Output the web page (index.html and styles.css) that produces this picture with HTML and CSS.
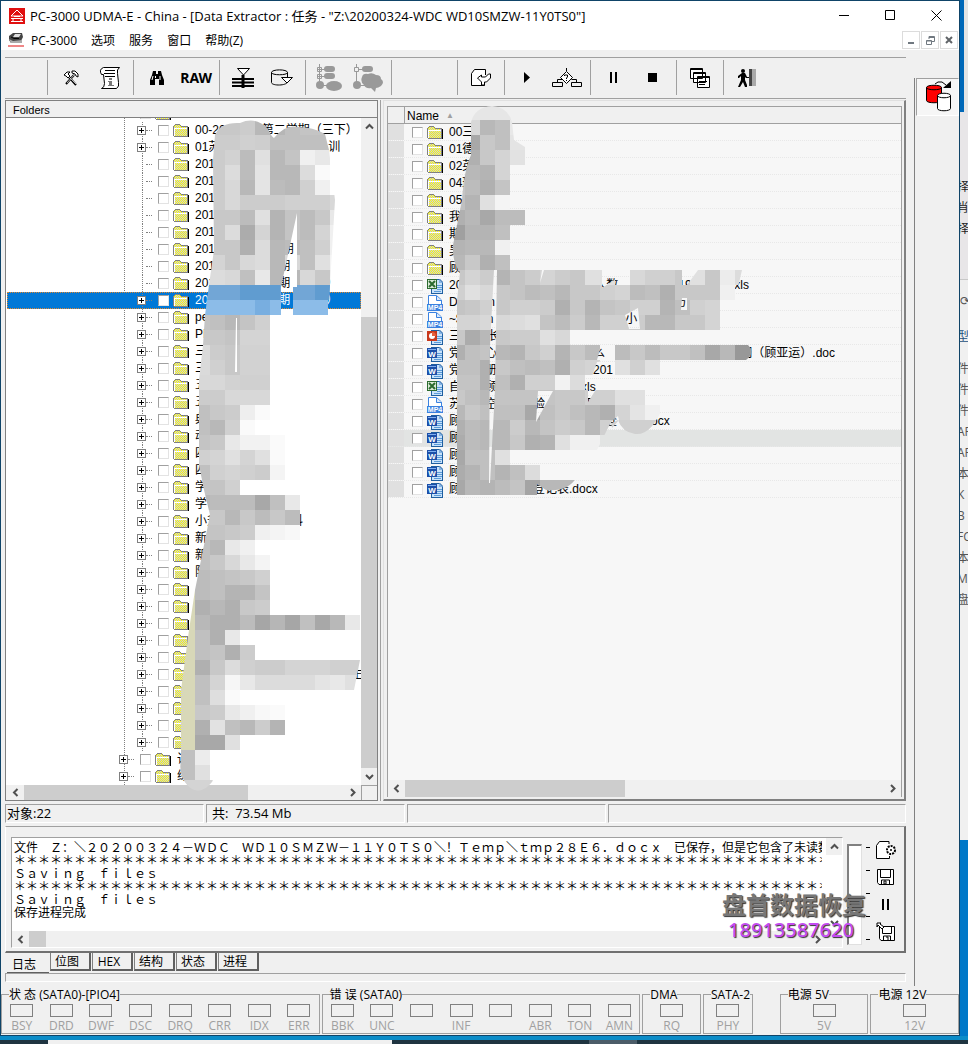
FILE: index.html
```html
<!DOCTYPE html>
<html lang="zh-CN">
  <head>
    <meta charset="UTF-8" />
    <meta name="viewport" content="width=device-width, initial-scale=1.0" />
    <title>PC-3000 UDMA-E</title>
    <link rel="stylesheet" href="styles.css" />
  </head>
  <body>
    <svg class="defs" width="0" height="0" aria-hidden="true">
      <defs>
        <pattern id="dither" width="2" height="2" patternUnits="userSpaceOnUse">
          <rect width="2" height="2" fill="#ffff00" />
          <rect width="1" height="1" fill="#c4c4ec" />
          <rect x="1" y="1" width="1" height="1" fill="#c4c4ec" />
        </pattern>
        <symbol id="i-folder" viewBox="0 0 16 14">
          <path d="M2 13h14V3h-1v9H2z" fill="#000" />
          <path d="M0 2h1V1h1V0h5v1h1v1h7v11H1v-1H0z" fill="#808080" />
          <path d="M1 2h1V1h5v1h1v1h6v9H1z" fill="url(#dither)" />
          <path d="M1 4h13v1H2v7H1z" fill="#fff" />
        </symbol>
        <symbol id="i-page" viewBox="0 0 16 16">
          <path d="M4 1h9l3 3v12H4z" fill="#1f5fa0" />
          <path d="M5 2h7v3h3v10H5z" fill="#c9e2fa" />
          <path d="M12 1v4h4z" fill="#86b4e4" />
          <path d="M10 7.500h5M10 9.500h5M10 11.500h5M7 13.500h7" stroke="#5b9bd8" />
        </symbol>
        <symbol id="i-doc" viewBox="0 0 16 16">
          <use href="#i-page" width="16" height="16" />
          <path d="M0 2h10v10H0z" fill="#1c4fa8" />
          <path d="M1 3h8v1H1z" fill="#7fb0ef" />
          <text class="badge" x="5" y="11" font-size="8">W</text>
        </symbol>
        <symbol id="i-xls" viewBox="0 0 16 16">
          <use href="#i-page" width="16" height="16" />
          <path d="M0 1h10v10H0z" fill="#2c6b2f" />
          <path d="M1 2h8v8H1z" fill="#dcebd8" />
          <path d="M2 3l6 6M8 3L2 9" stroke="#2c6b2f" stroke-width="2" />
        </symbol>
        <symbol id="i-ppt" viewBox="0 0 16 16">
          <use href="#i-page" width="16" height="16" />
          <path d="M0 2h10v10H0z" fill="#c8381c" />
          <circle cx="5" cy="7" r="3" fill="#fff" />
          <path d="M5 7V3a4 4 0 0 1 4 4z" fill="#e8603c" />
        </symbol>
        <symbol id="i-mp4" viewBox="0 0 16 16">
          <path d="M1.500 10V.5h8L14.500 5v5" fill="#fff" stroke="#3b82e0" />
          <path d="M9.500 1v4.500h5" fill="#dbe9fb" stroke="#3b82e0" />
          <path d="M0 9h16v7H0z" fill="#3b82e0" />
          <text class="badge" x="8" y="15" font-size="7">MP4</text>
        </symbol>
        <symbol id="i-up" viewBox="0 0 9 9"><path d="M1 6.500L4.500 3 8 6.500" fill="none" stroke="#505050" stroke-width="2" /></symbol>
        <symbol id="i-down" viewBox="0 0 9 9"><path d="M1 3l3.500 3.500L8 3" fill="none" stroke="#505050" stroke-width="2" /></symbol>
        <symbol id="i-left" viewBox="0 0 9 9"><path d="M6.500 1L3 4.500 6.500 8" fill="none" stroke="#505050" stroke-width="2" /></symbol>
        <symbol id="i-right" viewBox="0 0 9 9"><path d="M3 1l3.500 3.500L3 8" fill="none" stroke="#505050" stroke-width="2" /></symbol>
      </defs>
    </svg>

    <div class="screen">
      <div class="window">
        <header class="title-bar">
          <svg class="app-icon" width="16" height="16" viewBox="0 0 16 16">
            <path d="M0 0h16v16H0z" fill="#e01010" />
            <path d="M8 2L2 8h12zM2 10.500h12M5 8.500h6M2 13.500h12M4 10v4M12 10v4" fill="none" stroke="#fff" />
          </svg>
          <h1>PC-3000 UDMA-E - China - [Data Extractor : 任务 - "Z:\20200324-WDC WD10SMZW-11Y0TS0"]</h1>
          <div class="window-buttons">
            <button type="button" aria-label="Minimize"><svg width="11" height="11"><path d="M0 5.500h10" stroke="#000" /></svg></button>
            <button type="button" aria-label="Maximize"><svg width="11" height="11"><path d="M.5.5h9v9h-9z" fill="none" stroke="#000" /></svg></button>
            <button type="button" aria-label="Close"><svg width="11" height="11"><path d="M.5.5l10 10M10.500.5l-10 10" stroke="#000" /></svg></button>
          </div>
        </header>

        <nav class="menu-bar">
          <svg class="app-icon" width="16" height="14" viewBox="0 0 16 14">
            <path d="M1 3l4-3h9l1 4-3 6H3L1 7z" fill="#444" />
            <path d="M7 1h6l-2 3H5z" fill="#ddd" /><path d="M1 6l4 2 9-1v3H3z" fill="#aaa" />
            <path d="M3 4l3 1.500h5" fill="none" stroke="#000" />
            <path d="M0 13h16" stroke="#e01010" />
          </svg>
          <button type="button">PC-3000</button>
          <button type="button">选项</button>
          <button type="button">服务</button>
          <button type="button">窗口</button>
          <button type="button">帮助(Z)</button>
          <div class="child-buttons">
            <button type="button" aria-label="Minimize child"><svg width="9" height="9"><path d="M1 7h6" stroke="#707880" stroke-width="2" /></svg></button>
            <button type="button" aria-label="Restore child"><svg width="9" height="9"><path d="M.5 4.500h5v4h-5zM.5 5h5M3 3V.5h5.500v5H6M3 1.500h5" fill="none" stroke="#707880" /></svg></button>
            <button type="button" aria-label="Close child"><svg width="9" height="9"><path d="M1 1l6 6M7 1L1 7" stroke="#606468" stroke-width="2" /></svg></button>
          </div>
        </nav>

        <div class="workspace">
          <main class="main">
            <div class="toolbar">
              <div class="tool-group start"></div>
              <div class="tool-group pair">
                <button type="button" aria-label="Tools"><svg width="16" height="16"><path d="M3 14l8-9M5 6l8 9" stroke="#000" stroke-width="2" fill="none" /><path d="M4 13l7-8M6 7l7 7" stroke="#fff" fill="none" stroke-width=".7" /><path d="M1 5l3-3h3L5 4l2 2-2 2-2-2zM9 1h3l3 3v3l-2-1-1-2-3-1z" fill="#fff" stroke="#000" /></svg></button>
                <button type="button" aria-label="Script info"><svg width="22" height="24"><path d="M4.500 1.500h16q-3 2-2 6l1 9q1 4-2 6h-15q3-1 3-5l-1-9h-2q-3-5 2-7z" fill="#fff" stroke="#000" /><path d="M6 4.500h10M5 7.500h11M6 10.500h10" stroke="#000" /><path d="M10 12h3v2h-3zM9 15h4v4h2v1H9v-1h1v-3H9z" fill="#777" /></svg></button>
              </div>
              <div class="tool-group pair">
                <button type="button" aria-label="Find"><svg width="16" height="14"><path d="M4 0h3v3h2V0h3l1 4 2 5v5h-5V8H6v6H1V9l2-5z" fill="#000" /><path d="M3 9l1-4M11 9V5M6.500 5v2" stroke="#fff" /></svg></button>
                <button type="button" class="raw">RAW</button>
              </div>
              <div class="tool-group pair">
                <button type="button" aria-label="Level"><svg width="22" height="20"><path d="M5.500.5h12L11.500 7z" fill="#fff" stroke="#000" /><path d="M0 11h22M0 14.500h22M0 18h22" stroke="#000" stroke-width="2" /><path d="M11 7v13" stroke="#000" stroke-width="3" /></svg></button>
                <button type="button" aria-label="Database"><svg width="24" height="18"><path d="M1.500 3.500C1.500 0 17.500 0 17.500 3.500v9C17.500 17 1.500 17 1.500 13.500zM1.500 3.500c0 3 16 3 16 0" fill="#f0f0f0" stroke="#000" /><path d="M11.500 8.500h11L17 14z" fill="#fff" stroke="#000" /></svg></button>
              </div>
              <div class="tool-group pair">
                <button type="button" disabled aria-label="Expand tree"><svg width="26" height="28"><path d="M3.500 0v20M3 5.500h7M3 12.500h7M5 21.500h8" stroke="#999" fill="none" /><path d="M1.500 3.500h4v4h-4zM1.500 10.500h4v4h-4z" fill="#f0f0f0" stroke="#999" /><path d="M3.500 4v3M2 5.500h3M3.500 11v3M2 12.500h3" stroke="#999" /><rect x="8" y="2" width="11" height="6" rx="3" fill="#999" /><rect x="8" y="9" width="11" height="6" rx="3" fill="#999" /><circle cx="4" cy="21" r="4" fill="#999" /><ellipse cx="18" cy="22" rx="8" ry="5" fill="#999" /></svg></button>
                <button type="button" disabled aria-label="Cloud tree"><svg width="32" height="28"><path d="M4.500 0v20M4 5.500h8M6 21.500h8" stroke="#999" fill="none" /><path d="M2.500 3.500h4v4h-4z" fill="#f0f0f0" stroke="#999" /><rect x="10" y="2" width="11" height="6" rx="3" fill="#999" /><circle cx="5" cy="21" r="4" fill="#999" /><path d="M10 13q1-4 6-3 4-2 8 1 5 0 5 4 4 3 0 7-3 2-5 2l-1 4-4-4q-5 1-7-3-4-3-2-8z" fill="#999" /></svg></button>
              </div>
              <div class="tool-group blank"></div>
              <div class="tool-group single">
                <button type="button" aria-label="Export"><svg width="22" height="20"><path d="M15.500 7V1.500h-11l-3 4v12h13v-3" fill="#fff" stroke="#000" /><path d="M7.500 10l4-3v2h4l3-3h2v4l-4 4h-2v3h-3v-3z" fill="#fff" stroke="#000" /></svg></button>
              </div>
              <div class="tool-group pair">
                <button type="button" aria-label="Play"><svg width="7" height="11"><path d="M0 0l6 5.500L0 11z" /></svg></button>
                <button type="button" aria-label="Decision"><svg width="30" height="20"><path d="M14.500 0v3M5.500 14v-2.500h5M24.500 14v-2.500h-5M.5 14.500h10v4H.5zM19.500 14.500h10v4h-10z" fill="none" stroke="#000" /><path d="M14.500 3.500l6 6-6 6-6-6z" fill="#fff" stroke="#000" /><path d="M12.500 8V7h3v2l-1 1v1M14.500 12v1" fill="none" stroke="#000" /></svg></button>
              </div>
              <div class="tool-group pair">
                <button type="button" aria-label="Pause"><svg width="8" height="12"><path d="M0 0h2v11H0zM5 0h2v11H5z" /></svg></button>
                <button type="button" aria-label="Stop"><svg width="10" height="10"><path d="M0 0h9v9H0z" /></svg></button>
              </div>
              <div class="tool-group single">
                <button type="button" aria-label="Windows"><svg width="20" height="20"><path d="M.5.5h12v10H.5zM3.500 4.500h12v10h-12zM7.500 8.500h12v11h-12z" fill="#fff" stroke="#000" /><path d="M0 1.500h13M3 5.500h13M7 9.500h13" stroke="#000" /><path d="M9 13.500h8M9 16.500h6" stroke="#000" /></svg></button>
              </div>
              <div class="tool-group single last">
                <button type="button" aria-label="Exit"><svg width="20" height="20"><circle cx="6" cy="3" r="2" /><path d="M5 5h3l2 4h2v1H9L8 9v3l2 5v2H8l-2-5-3 5H1l3-7V8L2 10H1V8z" /><path d="M12 1h3v17h-3z" fill="#444" /><path d="M15 1h4v17h-4z" fill="#aaa" /></svg></button>
              </div>
            </div>

            <div class="panels">
              <section class="tree-panel">
                <h2 class="panel-head">Folders</h2>
                <div class="tree-body">
                  <ul class="tree" id="tree"></ul>
                  <div class="scroll-v">
                    <button type="button" aria-label="Scroll up"><svg width="9" height="9"><use href="#i-up" /></svg></button>
                    <div class="thumb tree-thumb"></div>
                    <button type="button" aria-label="Scroll down"><svg width="9" height="9"><use href="#i-down" /></svg></button>
                  </div>
                </div>
                <div class="tree-foot">
                  <div class="scroll-h">
                    <button type="button" aria-label="Scroll left"><svg width="9" height="9"><use href="#i-left" /></svg></button>
                    <div class="track"><div class="thumb tree-thumb-h"></div></div>
                    <button type="button" aria-label="Scroll right"><svg width="9" height="9"><use href="#i-right" /></svg></button>
                  </div>
                  <div class="corner"></div>
                </div>
                <svg class="mosaic" id="treeMosaic" viewBox="5 100 355 701" width="355" height="701" aria-hidden="true"></svg>
              </section>

              <section class="file-panel">
                <div class="file-box">
                  <div class="file-head"><span class="gutter"></span><span>Name</span><span class="sort">▲</span></div>
                  <ul class="files" id="files"></ul>
                  <div class="scroll-h">
                    <button type="button" aria-label="Scroll left"><svg width="9" height="9"><use href="#i-left" /></svg></button>
                    <div class="track"><div class="thumb file-thumb-h"></div></div>
                    <button type="button" aria-label="Scroll right"><svg width="9" height="9"><use href="#i-right" /></svg></button>
                  </div>
                </div>
                <svg class="mosaic" id="fileMosaic" viewBox="383 100 500 701" width="500" height="701" aria-hidden="true"></svg>
              </section>
            </div>

            <div class="status-bar">
              <span>对象:22</span>
              <span class="total">共:&nbsp; 73.54 Mb</span>
              <span></span>
              <span class="wide"></span>
            </div>

            <section class="log-panel">
              <div class="log-box">
                <div class="log-body">
                  <div class="log-text">
                    <p>文件　Ｚ：＼２０２００３２４－ＷＤＣ　ＷＤ１０ＳＭＺＷ－１１Ｙ０ＴＳ０＼！Ｔｅｍｐ＼ｔｍｐ２８Ｅ６．ｄｏｃｘ　已保存，但是它包含了未读数</p>
                    <p>＊＊＊＊＊＊＊＊＊＊＊＊＊＊＊＊＊＊＊＊＊＊＊＊＊＊＊＊＊＊＊＊＊＊＊＊＊＊＊＊＊＊＊＊＊＊＊＊＊＊＊＊＊＊＊＊＊＊＊＊＊＊＊＊＊＊＊＊</p>
                    <p>Ｓａｖｉｎｇ　ｆｉｌｅｓ</p>
                    <p>＊＊＊＊＊＊＊＊＊＊＊＊＊＊＊＊＊＊＊＊＊＊＊＊＊＊＊＊＊＊＊＊＊＊＊＊＊＊＊＊＊＊＊＊＊＊＊＊＊＊＊＊＊＊＊＊＊＊＊＊＊＊＊＊＊＊＊＊</p>
                    <p>Ｓａｖｉｎｇ　ｆｉｌｅｓ</p>
                    <p>保存进程完成</p>
                  </div>
                  <div class="log-scroll">
                    <button type="button" aria-label="Scroll up"><svg width="9" height="9"><use href="#i-up" /></svg></button>
                    <button type="button" class="plain" aria-label="Scroll down"><svg width="9" height="9"><use href="#i-down" /></svg></button>
                  </div>
                </div>
                <div class="scroll-h">
                  <button type="button" aria-label="Scroll left"><svg width="9" height="9"><use href="#i-left" /></svg></button>
                  <div class="track"><div class="thumb log-thumb-h"></div></div>
                  <button type="button" aria-label="Scroll right"><svg width="9" height="9"><use href="#i-right" /></svg></button>
                </div>
              </div>
              <div class="gauge"></div>
              <div class="ticks"><i></i><i></i><i></i><i></i><i></i></div>
              <div class="log-tools">
                <button type="button" aria-label="Log settings"><svg width="22" height="18"><path d="M14 3V.5H4.500l-3 4v13h13V15" fill="#fff" stroke="#000" /><circle cx="16" cy="9" r="4" fill="#fff" stroke="#000" stroke-width="2" stroke-dasharray="2 1" /><circle cx="16" cy="9" r="1" /></svg></button>
                <button type="button" aria-label="Save log"><svg width="18" height="16"><path d="M.5.5h16v15H2l-1.500-2z" fill="#fff" stroke="#000" /><path d="M3.500.5h10v8h-10zM4.500 15v-4h8v4M7 12h2v3H7z" fill="none" stroke="#000" /></svg></button>
                <button type="button" aria-label="Pause log"><svg width="8" height="12"><path d="M0 0h2v11H0zM5 0h2v11H5z" /></svg></button>
                <button type="button" aria-label="Save as"><svg width="20" height="20"><path d="M3.500 4.500h15v14H5l-1.500-2z" fill="#fff" stroke="#000" /><path d="M6.500 4.500h9v7h-9zM7.500 18v-4h7v4M10 15h2v3" fill="none" stroke="#000" /><path d="M1 1h4l-1 1 4 3-2 2-4-4-1 2z" fill="#fff" stroke="#000" /></svg></button>
              </div>
              <div class="watermark"><b>盘首数据恢复</b><span>18913587620</span></div>
            </section>

            <div class="tabs">
              <button type="button" class="tab active">日志</button>
              <button type="button" class="tab">位图</button>
              <button type="button" class="tab">HEX</button>
              <button type="button" class="tab">结构</button>
              <button type="button" class="tab">状态</button>
              <button type="button" class="tab">进程</button>
            </div>
            <div class="rule"></div>
          </main>

          <aside class="side">
            <button type="button" aria-label="Copy drive">
              <svg width="28" height="32"><path d="M2.500 6.500c0-3 15-3 15 0v13c0 3-15 3-15 0z" fill="#f00" stroke="#000" /><path d="M2.500 6.500c0 3 15 3 15 0" fill="none" stroke="#000" /><path d="M13.500 14.500c0-3 13-3 13 0v13c0 3-13 3-13 0z" fill="#fff" stroke="#000" /><path d="M13.500 14.500c0 3 13 3 13 0M11 3l3-2h4l4 3" fill="none" stroke="#000" /><path d="M19 7h8V0z" /></svg>
            </button>
          </aside>
        </div>

        <footer class="leds">
          <fieldset class="eight">
            <legend>状 态 (SATA0)-[PIO4]</legend>
            <span class="led">BSY</span><span class="led">DRD</span><span class="led">DWF</span><span class="led">DSC</span><span class="led">DRQ</span><span class="led">CRR</span><span class="led">IDX</span><span class="led">ERR</span>
          </fieldset>
          <fieldset class="eight">
            <legend>错 误 (SATA0)</legend>
            <span class="led">BBK</span><span class="led">UNC</span><span class="led"></span><span class="led">INF</span><span class="led"></span><span class="led">ABR</span><span class="led">TON</span><span class="led">AMN</span>
          </fieldset>
          <fieldset class="dma"><legend>DMA</legend><span class="led">RQ</span></fieldset>
          <fieldset class="sata"><legend>SATA-2</legend><span class="led">PHY</span></fieldset>
          <fieldset class="power first"><legend>电源 5V</legend><span class="led">5V</span></fieldset>
          <fieldset class="power"><legend>电源 12V</legend><span class="led">12V</span></fieldset>
        </footer>
      </div>

      <div class="behind">
        <div class="behind-top"></div>
        <div class="behind-menu"><span>择</span><span>肖</span><span>择</span></div>
        <div class="behind-tool">⟳</div>
        <div class="behind-list"><span class="head">型</span><span>件</span><span>件</span><span>件</span><span>AP</span><span>AP</span><span>本</span><span>K</span><span>B</span><span>FC</span><span>本</span><span>M</span><span>盘</span></div>
        <div class="behind-end"></div>
      </div>
    </div>
    <div class="taskbar"><span></span><span></span></div>
    <script src="script.js"></script>
  </body>
</html>
```

FILE: styles.css
```css
* {
  box-sizing: border-box;
}
body {
  margin: 0;
  min-height: 100vh;
  display: flex;
  flex-direction: column;
  background-color: #0c8cc8;
  color: #000;
  font-family: "Open Sans", "Noto Sans CJK SC", sans-serif;
  font-size: 12px;
  overflow-x: hidden;
}
button {
  display: flex;
  align-items: center;
  justify-content: center;
  margin: 0;
  padding: 0;
  border: none;
  background: none;
  color: inherit;
  font: inherit;
}
svg {
  flex: none;
}
h1,
h2,
p,
ul {
  margin: 0;
  padding: 0;
  list-style: none;
  font-size: 12px;
  font-weight: normal;
}
.defs {
  position: absolute;
}
.badge {
  fill: white;
  font-family: "Liberation Sans", sans-serif;
  font-weight: bold;
  text-anchor: middle;
}
.screen {
  flex: 1;
  display: flex;
}
.window {
  flex: 1;
  min-width: 0;
  display: flex;
  flex-direction: column;
  background-color: #f0f0f0;
  border: 1px solid #0f4468;
}
.app-icon {
  margin-right: 5px;
}

/* title and menu */
.title-bar {
  display: flex;
  align-items: center;
  height: 29px;
  padding-left: 8px;
  background-color: white;
}
.title-bar h1 {
  flex: 1;
  white-space: nowrap;
  font-size: 13px;
}
.window-buttons {
  display: flex;
}
.window-buttons button {
  width: 46px;
}
.menu-bar {
  display: flex;
  align-items: center;
  gap: 14px;
  height: 20px;
  padding-left: 7px;
  background-color: white;
}
.menu-bar .app-icon {
  margin-right: -7px;
}
.child-buttons {
  flex: 1;
  display: flex;
  justify-content: flex-end;
  gap: 1px;
  padding-right: 1px;
}
.child-buttons button {
  width: 18px;
  height: 18px;
  border: 1px solid #dcdcdc;
}

/* toolbar */
.workspace {
  flex: 1;
  display: flex;
}
.main {
  flex: 1;
  min-width: 0;
  display: flex;
  flex-direction: column;
  padding: 7px 0 4px 4px;
}
.toolbar {
  display: flex;
  height: 42px;
  padding: 2px 0 3px;
  border-top: 1px solid #a0a0a0;
  border-bottom: 1px solid #a0a0a0;
}
.tool-group {
  display: flex;
  padding: 0 3px;
  border-left: 1px solid #a0a0a0;
}
.tool-group button {
  width: 40px;
}
.start {
  width: 42px;
  border: none;
}
.pair {
  width: 86px;
}
.blank {
  width: 66px;
}
.single {
  width: 47px;
}
.raw {
  font-family: "Noto Sans", sans-serif;
  font-size: 14px;
  font-weight: bold;
}

/* folder tree */
.panels {
  flex: 1;
  display: flex;
  gap: 5px;
  margin-top: 1px;
}
.tree-panel {
  position: relative;
  width: 373px;
  display: flex;
  flex-direction: column;
  border: 1px solid #808080;
  box-shadow: 2px 0 #f0f0f0, 3px 0 #a0a0a0;
}
.panel-head {
  height: 17px;
  padding-left: 7px;
  border-bottom: 1px solid #808080;
  font-family: "Liberation Sans", sans-serif;
  font-size: 11px;
  line-height: 19px;
}
.tree-body {
  flex: 1;
  display: flex;
  padding-left: 1px;
  background-color: white;
}
.tree {
  flex: 1;
  min-width: 0;
  overflow: hidden;
  background: repeating-linear-gradient(#808080 0 1px, transparent 1px 2px) 117px 0 / 1px 100% no-repeat;
}
.tree,
.files {
  font-family: "Liberation Sans", "Noto Sans CJK SC", sans-serif;
}
.tree li {
  display: flex;
  align-items: center;
  height: 17px;
  padding-left: 130px;
  white-space: pre;
  overflow: hidden;
  line-height: 17px;
  background: repeating-linear-gradient(#808080 0 1px, transparent 1px 2px) 135px 0 / 1px 100% no-repeat;
}
.tree li.upper {
  padding-left: 112px;
  background: none;
}
.tree li.cut {
  margin-top: -13px;
}
.tree li.selected {
  background-color: #0078d7;
  outline: 1px dotted #e08830;
  outline-offset: -1px;
  color: white;
}
.plus {
  flex: none;
  width: 9px;
  height: 9px;
  border: 1px solid #808080;
  background: linear-gradient(#000, #000) center / 5px 1px no-repeat, linear-gradient(#000, #000) center / 1px 5px no-repeat, white;
}
.plus.none {
  visibility: hidden;
}
.tree li::before {
  content: "";
  order: 1;
  flex: none;
  width: 6px;
  border-top: 1px dotted #808080;
}
.tree svg {
  order: 3;
  margin: 1px 6px 0 4px;
}
.tree label {
  order: 4;
}
input[type="checkbox"] {
  appearance: none;
  flex: none;
  width: 11px;
  height: 11px;
  margin: 0;
  border: 1px solid #a0a0a0;
  border-right-color: #e3e3e3;
  border-bottom-color: #e3e3e3;
  background-color: white;
}
.tree input[type="checkbox"] {
  order: 2;
  margin-left: 6px;
}

/* scrollbars */
.scroll-v {
  width: 16px;
  display: flex;
  flex-direction: column;
  justify-content: space-between;
  background-color: #f0f0f0;
}
.scroll-v button {
  height: 17px;
}
.thumb {
  background-color: #cdcdcd;
}
.tree-thumb {
  flex: 1;
  margin-top: 182px;
}
.scroll-h {
  flex: 1;
  display: flex;
  height: 16px;
  background-color: #f0f0f0;
}
.scroll-h button {
  width: 17px;
}
.scroll-h .track {
  flex: 1;
  display: flex;
}
.tree-thumb-h {
  width: 70%;
}
.file-thumb-h {
  width: 46%;
}
.log-thumb-h {
  width: 17px;
}
.tree-foot {
  display: flex;
  padding-left: 1px;
}
.tree-foot .scroll-h {
  height: 15px;
}
.corner {
  width: 16px;
  border-top: 1px solid #a0a0a0;
  border-left: 1px solid #a0a0a0;
}

/* file list */
.file-panel {
  position: relative;
  flex: 1;
  min-width: 0;
  display: flex;
  padding: 5px 2px 2px 3px;
  border: 1px solid #808080;
  border-width: 1px 2px 2px 1px;
  border-left-color: #e0e0e0;
  border-top-color: #e0e0e0;
  background-color: #f0f0f0;
}
.file-box {
  flex: 1;
  min-width: 0;
  display: flex;
  flex-direction: column;
  border: 1px solid #a0a0a0;
  border-bottom: none;
}
.file-head {
  display: flex;
  align-items: flex-end;
  height: 17px;
  border-bottom: 1px solid #a0a0a0;
  font-family: "Liberation Sans", sans-serif;
  line-height: 14px;
}
.gutter {
  align-self: stretch;
  width: 17px;
  margin-right: 2px;
  border-right: 1px solid #a0a0a0;
}
.sort {
  margin-left: 7px;
  color: #a0a0a0;
  font-size: 8px;
}
.files {
  flex: 1;
  background-color: #f7f7f7;
}
.files li {
  display: flex;
  align-items: center;
  height: 17px;
  line-height: 17px;
  border-bottom: 1px dotted #e8e8e8;
  white-space: pre;
}
.files li::before {
  content: "";
  align-self: stretch;
  width: 16px;
  margin-right: 8px;
  background-color: #e0e0e0;
}
.files li.current {
  background-color: #e2e4e3;
}
.files svg {
  margin: 1px 6px 0 4px;
}
.file-box .scroll-h {
  flex: none;
  height: 17px;
}
.mosaic {
  position: absolute;
  top: -1px;
  left: -1px;
  pointer-events: none;
}

/* status line */
.status-bar {
  display: flex;
  gap: 2px;
  height: 19px;
  margin: 3px 0;
}
.status-bar span {
  flex: 199;
  border: 1px solid #a0a0a0;
  border-right-color: white;
  border-bottom-color: white;
  font-size: 13px;
  line-height: 16px;
  text-indent: 1px;
}
.status-bar .total {
  text-indent: 5px;
}
.status-bar .wide {
  flex: 299;
}

/* log */
.log-panel {
  position: relative;
  display: flex;
  height: 127px;
  padding: 10px 7px 3px 5px;
  border-top: 1px solid #a0a0a0;
  border-right: 2px solid #707070;
  border-bottom: 2px solid #707070;
  border-left: 1px solid white;
}
.log-box {
  flex: 1;
  min-width: 0;
  display: flex;
  flex-direction: column;
  border: 1px solid #a0a0a0;
  border-right-color: white;
  border-bottom-color: white;
}
.log-body {
  flex: 1;
  display: flex;
  min-height: 0;
  background-color: white;
}
.log-text {
  flex: 1;
  min-width: 0;
  margin-right: 4px;
  padding: 2px 0 0 2px;
  overflow: hidden;
  font-family: "Noto Sans CJK SC", sans-serif;
  line-height: 13px;
  white-space: nowrap;
}
.log-text p {
  height: 13px;
}
.log-scroll {
  width: 16px;
  display: flex;
  flex-direction: column;
  justify-content: space-between;
}
.log-scroll button {
  height: 17px;
  background-color: #f0f0f0;
}
.log-scroll .plain {
  background-color: white;
}
.log-box .scroll-h {
  flex: none;
  padding-right: 16px;
}
.gauge {
  width: 15px;
  margin: 7px 4px 3px;
  background-color: white;
  border: 1px solid #808080;
  border-width: 2px 1px 1px 2px;
  border-right-color: #e0e0e0;
  border-bottom-color: #e0e0e0;
}
.ticks {
  display: flex;
  flex-direction: column;
  justify-content: space-between;
  width: 9px;
  padding: 10px 0 8px;
}
.ticks i {
  width: 4px;
  height: 1px;
  background-color: #000;
}
.log-tools {
  width: 22px;
  display: flex;
  flex-direction: column;
  justify-content: space-between;
  padding: 3px 0 6px;
}
.log-tools button {
  height: 20px;
}
.watermark {
  position: absolute;
  right: 38px;
  bottom: 10px;
  color: #777;
  text-shadow: 1px 1px 1px #333;
}
.watermark b,
.watermark span {
  display: block;
  font-size: 24px;
  line-height: 28px;
}
.watermark span {
  padding-left: 6px;
  color: #c44bf2;
  font-family: "Noto Sans", sans-serif;
  font-size: 20px;
  font-weight: 500;
  line-height: 22px;
}

/* tabs */
.tabs {
  display: flex;
  gap: 1px;
  height: 20px;
  margin-left: 2px;
}
.tab {
  width: 41px;
  height: 18px;
  border: 1px solid #a0a0a0;
  border-width: 0 2px 2px 1px;
  border-right-color: #606060;
  border-bottom-color: #606060;
  border-left-color: #808080;
  padding-right: 6px;
}
.tab.active {
  width: 42px;
  height: 20px;
  padding: 2px 8px 0 0;
  border-width: 0 0 1px;
}
.rule {
  height: 9px;
  border: 1px solid #a0a0a0;
  border-right-color: white;
  border-bottom-color: white;
}

/* copy button on the right */
.side {
  width: 45px;
  margin: 28px 0 0 8px;
  border-left: 1px solid #808080;
}
.side button {
  width: 43px;
  height: 38px;
  margin-left: 1px;
  border: 1px solid #a0a0a0;
  border-right-color: white;
  border-bottom-color: white;
  background-color: #f6f6f6;
}

/* drive state lamps */
.leds {
  display: flex;
  gap: 2px;
  height: 49px;
}
fieldset {
  display: flex;
  justify-content: center;
  min-width: 0;
  height: 48px;
  margin: 0;
  padding: 2px 0 0;
  border: 1px solid #a0a0a0;
}
legend {
  height: 16px;
  margin-left: 7px;
  padding: 0;
  line-height: 18px;
  white-space: nowrap;
}
.led {
  flex: 1;
  color: #a0a0a0;
  line-height: 18px;
  text-align: center;
}
.led::before {
  content: "";
  display: block;
  width: 21px;
  height: 11px;
  margin: 0 auto;
  border: 1px solid #808080;
}
.eight {
  flex: 318;
}
.dma {
  flex: 57;
}
.sata {
  flex: 48;
}
.power {
  flex: 87;
}
.power.first {
  margin-left: 25px;
}

/* window behind */
.behind {
  width: 8px;
  display: flex;
  flex-direction: column;
  overflow: hidden;
  color: #555;
  background-color: #f0f0f0;
}
.behind-top {
  height: 112px;
  border-left: 4px solid #0068b8;
  background-color: #e4e4e4;
}
.behind-menu,
.behind-list {
  display: flex;
  flex-direction: column;
  line-height: 22px;
}
.behind-menu {
  height: 168px;
  padding-top: 64px;
  border-bottom: 1px solid #c8c8c8;
  background-color: #e8e6e8;
  color: #222;
}
.behind span {
  height: 21px;
  text-indent: -3px;
  white-space: nowrap;
}
.behind-tool {
  height: 40px;
  padding-top: 12px;
  background-color: #eeeeee;
}
.behind-list {
  padding-top: 6px;
  flex: 1;
}
.behind-list .head {
  height: 32px;
  color: #245080;
}
.behind-end {
  height: 196px;
  background-color: #0078c8;
}
.taskbar {
  display: flex;
  height: 8px;
  border-top: 4px solid #0c8cc8;
  background-color: #1f3440;
}
.taskbar span {
  width: 344px;
  margin-left: 48px;
  background-color: #f0f0f0;
}
.taskbar span + span {
  width: 48px;
  margin-left: 197px;
  background-color: #4c5c68;
}
```

FILE: script.js
```javascript
// name, then flags: + expandable, s selected, u upper level, c cut by the header
const folders = [
  ["工作", "uc"],
  ["00-20　　　第二学期（三下）", "+"],
  ["01苏　　　　　　　　　训", "+"],
  ["2015", ""],
  ["2015", ""],
  ["2016", ""],
  ["2016", ""],
  ["2017", ""],
  ["2017　　　　　期", ""],
  ["201 　　　　　期（　　）", ""],
  ["201 　　　　　期（　　）", ""],
  ["201 　　　　学期（　　）", "+s"],
  ["pe", "+"],
  ["PP", "+"],
  ["三", "+"],
  ["三", "+"],
  ["五", "+"],
  ["五", "+"],
  ["典", "+"],
  ["动", "+"],
  ["四", "+"],
  ["四", "+"],
  ["学", "+"],
  ["学", "+"],
  ["小升　　　　　　科", "+"],
  ["新", "+"],
  ["新", "+"],
  ["阳", "+"],
  ["", "+"],
  ["", "+"],
  ["", "+"],
  ["", "+"],
  ["", "+"],
  ["　　　　　　　　　　　　　生", "+"],
  ["", "+"],
  ["", "+"],
  ["", "+"],
  ["", "+"],
  ["讨", "+u"],
  ["综", "+u"],
];

const files = [
  ["folder", "00三"],
  ["folder", "01德"],
  ["folder", "02英"],
  ["folder", "04班"],
  ["folder", "05"],
  ["folder", "我"],
  ["folder", "期"],
  ["folder", "吴"],
  ["folder", "顾"],
  ["xls", "20　　　　　　　　　　　人数　　　　　19年　　 .xls"],
  ["mp4", "Da　　n　　　　　　　　　　　　　　　方"],
  ["mp4", "~$　　h　　　　　　　　　　　小"],
  ["ppt", "三　　 长"],
  ["doc", "党　　心　　　　　　　　么　　　　　　　　　　　 网（顾亚运）.doc"],
  ["doc", "党　　册　　　　　　　　201"],
  ["xls", "自　　顾　　　　　　　xls"],
  ["mp4", "苏　　空　　　验　　　江"],
  ["doc", "顾　　　　　　　　　　　　登　　.docx"],
  ["doc", "顾"],
  ["doc", "顾"],
  ["doc", "顾"],
  ["doc", "顾　　　　　　登记表.docx"],
];

document.getElementById("tree").innerHTML = folders
  .map(([name, flags], i) => {
    const cls = [
      flags.includes("u") ? "upper" : "",
      flags.includes("c") ? "cut" : "",
      flags.includes("s") ? "selected" : "",
    ].join(" ");
    const plus = flags.includes("+") ? "plus" : "plus none";
    return `<li class="${cls}"><button type="button" class="${plus}" aria-label="Expand"></button><input type="checkbox" id="t${i}" aria-label="Select folder" /><svg width="16" height="14"><use href="#i-folder" /></svg><label for="t${i}">${name}</label></li>`;
  })
  .join("");

document.getElementById("files").innerHTML = files
  .map(([kind, name], i) => {
    const h = kind === "folder" ? 14 : 16;
    return `<li class="${i === 18 ? "current" : ""}"><input type="checkbox" id="f${i}" /><svg width="16" height="${h}"><use href="#i-${kind}" /></svg><label for="f${i}">${name}</label></li>`;
  })
  .join("");

// Pixelated cover: each row is [y, first x, grey levels of 15px cells], ".." leaves a hole
const CELL = 15;

const treeRows = [
  [120, 210, "c8 c8 cc b8 b6 c0 c4 c4"],
  [135, 210, "cc cc d0 ce c0 c0 c0 c0"],
  [150, 210, "cc d2 bc e0 b8 c4 f0 e8"],
  [165, 210, "cc dc bc e4 b8 b8 dc fa"],
  [180, 210, "cc d8 b8 e4 bc b8 d0 f0"],
  [195, 210, "cc d8 cc cc cc d0 d0 d0 d8"],
  [210, 210, "c8 c8 bc e0 b4 c4 bc c8 e8"],
  [225, 210, "c8 dc ac d4 b4 c4 bc d4 f0"],
  [240, 210, "c8 c8 b0 dc b8 bc c0 d0 f0"],
  [255, 195, "dc d4 c8 d8 dc b8 d8 c0 e0 f4"],
  [270, 195, "dc dc d8 c0 e8 b8 b8 d8 c8 f0"],
  [315, 195, "c4 c0 b8 c4 d0"],
  [330, 195, "c8 c8 c4 d4 d4"],
  [345, 195, "da cc c8 d2 d2"],
  [360, 195, "da d0 c8 d2 d2"],
  [375, 195, "d8 d8 d2 d0 d0"],
  [390, 195, "cc cc d8 d8 d8"],
  [405, 195, "c0 c8 cc ee fa"],
  [420, 195, "c0 b8 d0 fa"],
  [435, 195, "c4 c8 e8 f2 f2 fa"],
  [450, 195, "d0 d4 e0 d4 e0 fa"],
  [465, 195, "c0 d0 d4 d0 cc f4"],
  [480, 195, "c4 c4 d0"],
  [495, 195, "b8 bc bc bc a8 c0 e8"],
  [510, 195, "c8 c8 b8 c8 bc c8 bc"],
  [525, 195, "c4 c4 c8 cc f0 f4 f8"],
  [540, 195, "c0 b8 e8 f0"],
  [555, 195, "c0 c8 d8 e8 f4"],
  [570, 195, "bc c0 c4 c8 d0"],
  [585, 195, "bc c0 b4 b4 c4"],
  [600, 195, "b0 b8 b0 c8 cc"],
  [615, 195, "b8 b0 b0 bc a6 b6 a6 c0 a8 b8 e8"],
  [630, 195, "c0 b0 e8"],
  [645, 195, "c0 c4 b0 cc"],
  [660, 195, "b0 c8 dc d0 cc cc d4 d4 d4 d0 d0"],
  [675, 195, "c0 d4 f6 e8 dc dc dc dc e4 e8 e0"],
  [690, 195, "c0 de fa"],
  [705, 195, "c8 cc e8 f0 f8 fa"],
  [720, 195, "b0 e2 c0 b8 cc b4"],
  [735, 195, "a8 a8 e0"],
  [750, 180, "c0 ec"],
  [765, 180, "c0 e0"],
  [780, 180, "d4 d4 d4"],
];

const fileRows = [
  [105, 465, "e6 e6 e6 e6"],
  [120, 465, "d8 b8 c0 e8"],
  [135, 465, "a8 c8 c0 e4"],
  [150, 465, "b0 c8 d4 e2"],
  [165, 450, "b4 b8 b4 d4"],
  [180, 450, "c4 bc b0 c4"],
  [195, 450, "c0 b4 e0 f4"],
  [210, 450, "b0 b8 a8 bc bc"],
  [225, 450, "a0 b4 b4 c0"],
  [240, 450, "b4 b8 b8 f0"],
  [255, 450, "b8 c8 b0 c0"],
  [270, 450, "c8 d4 cc b4 c4 cc d4 cc c8 e0 e0 .. d8 d0 d0 c8 e0 c8 ec dc"],
  [285, 450, "d0 e0 d8 c8 c4 bc c0 b8 c8 c8 d0 d4 bc c0 b0 c8 c8 c8 f0"],
  [300, 450, "c4 c8 d0 c8 d0 d0 cc b0 c8 b4 c4 c8 d0 d0 b4 c0 d0 d4"],
  [315, 450, "d4 d4 d8 d8 dc e0 c4 bc cc b8 d0 d0 cc b8 b8 c8 c8 d4"],
  [330, 450, "c8 ac b8 c8 cc cc e0 d8"],
  [345, 450, "b0 c0 c4 b8 b4 c8 d0 b4 c8 bc .. bc c8 bc c8 c8 c0 a8 b8 98 98"],
  [360, 450, "c0 c0 b0 c8 c0 bc c0 b0 d0 d4 .. e0 d0 e0"],
  [375, 450, "c4 c4 b0 c0 b0 d0 d0 f2 dc"],
  [390, 450, "c8 c0 b8 c4 c4 c4 c4 c8 c8 d0 d0 e0 e0"],
  [405, 450, "b8 c8 c0 c0 c0 a8 c0 c8 c0 b8 b0 d4 e4 f0"],
  [420, 450, "b0 bc b8 b8 cc b8 c4 cc c8 b8 d0 d0 d0 d0"],
  [435, 450, "ac bc b8 b8 c8 b0 b4 e0 f0 f0"],
  [450, 450, "a8 c0 c0 e0"],
  [465, 450, "ac b4 c0 b4 c0 dc"],
  [480, 450, "a8 b8 b4 bc c4 a4 b8 b8 b8"],
];

function cells(rows) {
  return rows
    .map(([y, x, levels]) =>
      levels
        .split(" ")
        .map((v, i) =>
          v === ".."
            ? ""
            : `<rect x="${x + i * CELL}" y="${y}" width="${CELL}" height="${CELL}" fill="#${v}${v}${v}"/>`
        )
        .join("")
    )
    .join("");
}

function drawMosaic(id, clip, body) {
  document.getElementById(id).innerHTML =
    `<clipPath id="${id}Clip"><path clip-rule="evenodd" d="${clip}"/></clipPath>` +
    `<g clip-path="url(#${id}Clip)" shape-rendering="crispEdges">${body}</g>`;
}

drawMosaic(
  "treeMosaic",
  "M215 135Q220 122 240 123Q256 116 268 129Q271 136 274 138Q285 124 298 127Q313 127 325 134L329 150 335 200 330 285 328 315 400 315V660H360L352 700H300V765H212Q214 780 212 782Q200 797 188 786Q178 775 181 760V690L189 630 195 590 204 545 210 515 204 490 199 465V380L203 345 205 315 209 285 214 250 213 160Z" +
    "M297 213V287H293V315H281V287ZM236 318H237V372H235Z",
  cells(treeRows) +
    '<path fill="#d8d8b8" d="M180 590h15v160h-15z"/>' +
    '<path fill="#72a6d6" d="M205 285h125v15H205z"/><path fill="#609cd0" d="M240 285h40v15h-40zM315 285h15v15h-15z"/>' +
    '<path fill="#8cbce8" d="M205 300h123v15H205z"/><path fill="#78aee0" d="M255 300h15v15h-15z"/>'
);

drawMosaic(
  "fileMosaic",
  "M471 122Q475 107 492 106Q508 107 512 122L514 140 525 147V270H742L735 300H720V330H574V345H748Q756 352 746 360H668V404H664Q652 436 635 434Q622 432 618 420L610 424 597 450H552V478H576Q568 492 546 490L537 484V495H457V300L460 272Q452 262 453 245L462 200Q464 170 471 155Z" +
    "M490 345L489 483H490L495 390 497 270H494ZM542 270H544L540 283ZM602 270H630L602 288ZM682 270H698L687 285H682ZM682 298H687V310H681ZM625 315L629 329H640L638 308ZM601 345L597 360H608ZM597 362L588 388V402L602 380 612 360ZM538 391H553L536 422ZM618 416L611 422 612 428 619 420Z",
  cells(fileRows)
);
```
